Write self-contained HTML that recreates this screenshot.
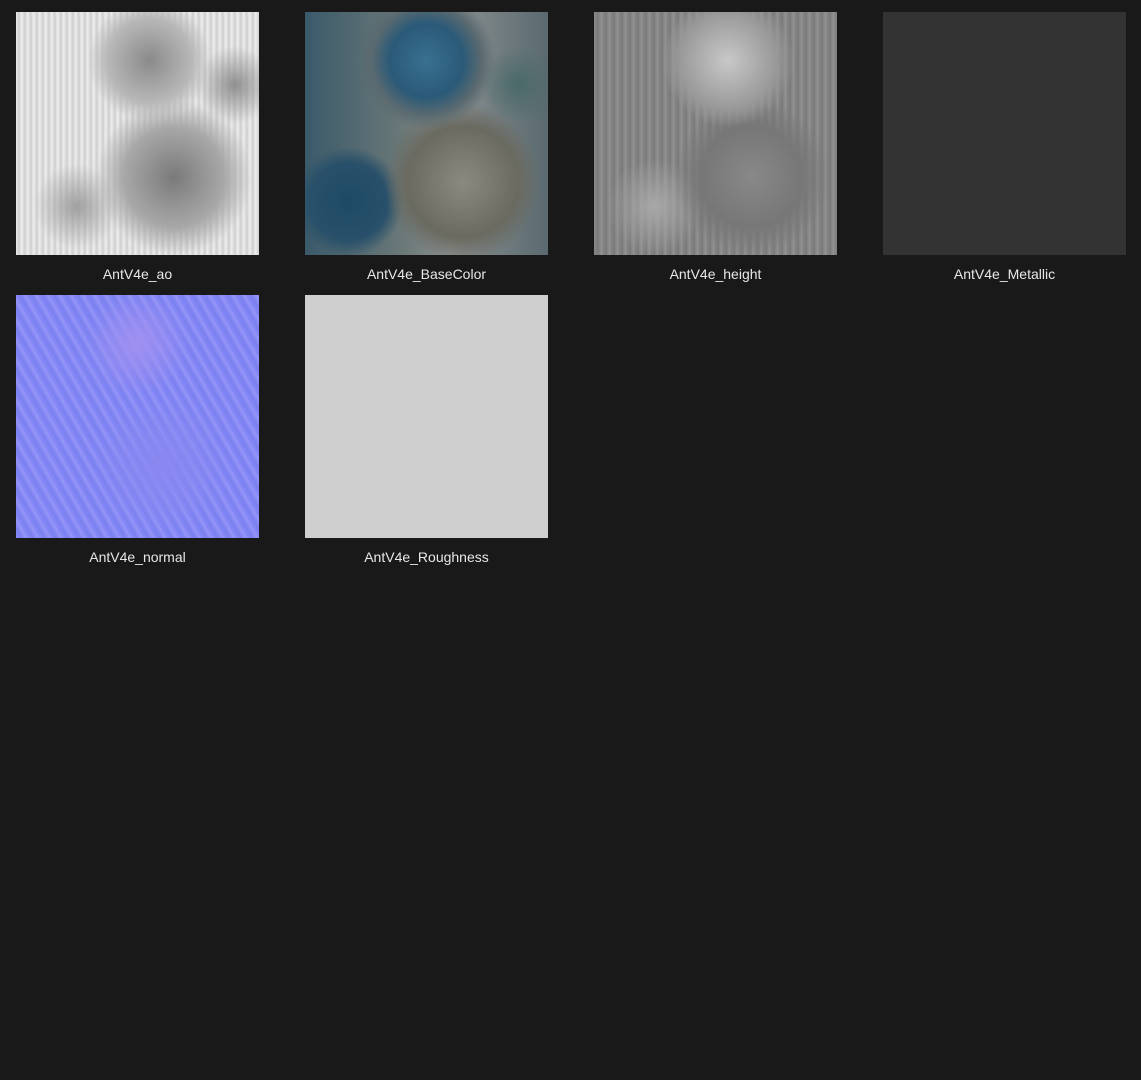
<!DOCTYPE html>
<html><head><style>
html,body{margin:0;padding:0;background:#191919;width:1141px;height:1080px;overflow:hidden}
.t{position:absolute;width:243px;height:243px}
.l{position:absolute;width:243px;text-align:center;color:#e8e8e8;font-family:"Liberation Sans",sans-serif;font-size:14px;line-height:16px}
</style></head><body>
<div class="t" style="left:16px;top:12px;background:
radial-gradient(circle at 55% 20% ,#8a8a8a 0,#b8b8b8 18%,transparent 26%),
radial-gradient(circle at 65% 68%,#7a7a7a 0,#a8a8a8 22%,transparent 34%),
radial-gradient(circle at 90% 30%,#909090 0,transparent 14%),
radial-gradient(circle at 25% 80%,#a0a0a0 0,transparent 16%),
repeating-linear-gradient(90deg,#e8e8e8 0,#cfcfcf 3px,#f2f2f2 6px),#dcdcdc"></div>
<div class="l" style="left:16px;top:266px">AntV4e_ao</div>
<div class="t" style="left:305px;top:12px;background:
radial-gradient(circle at 50% 20%,#3a7090 0,#2a5a78 16%,#5a6a70 24%,transparent 30%),
radial-gradient(circle at 65% 70%,#8a8a80 0,#6a6a60 24%,transparent 34%),
radial-gradient(circle at 18% 78%,#1e4a66 0,#28506a 14%,transparent 20%),
radial-gradient(circle at 88% 30%,#4a6a6a 0,transparent 14%),
linear-gradient(90deg,#3a5a6a,#6a7878 40%,#8a9090 60%,#5a6a70),#506068"></div>
<div class="l" style="left:305px;top:266px">AntV4e_BaseColor</div>
<div class="t" style="left:594px;top:12px;background:
radial-gradient(circle at 55% 20%,#c8c8c8 0,#9a9a9a 20%,transparent 28%),
radial-gradient(circle at 65% 68%,#888 0,#777 22%,transparent 34%),
radial-gradient(circle at 25% 80%,#a8a8a8 0,transparent 18%),
repeating-linear-gradient(90deg,#8a8a8a 0,#7a7a7a 4px,#959595 8px),#888"></div>
<div class="l" style="left:594px;top:266px">AntV4e_height</div>
<div class="t" style="left:883px;top:12px;background:#333"></div>
<div class="l" style="left:883px;top:266px">AntV4e_Metallic</div>
<div class="t" style="left:16px;top:295px;background:
radial-gradient(circle at 50% 20%,#a090f0 0,transparent 22%),
radial-gradient(circle at 60% 70%,#8a88f0 0,transparent 30%),
repeating-linear-gradient(60deg,#8a8cf8 0,#7a80f0 5px,#9a98f8 10px),#8486f2"></div>
<div class="l" style="left:16px;top:549px">AntV4e_normal</div>
<div class="t" style="left:305px;top:295px;background:#cfcfcf"></div>
<div class="l" style="left:305px;top:549px">AntV4e_Roughness</div>
</body></html>
